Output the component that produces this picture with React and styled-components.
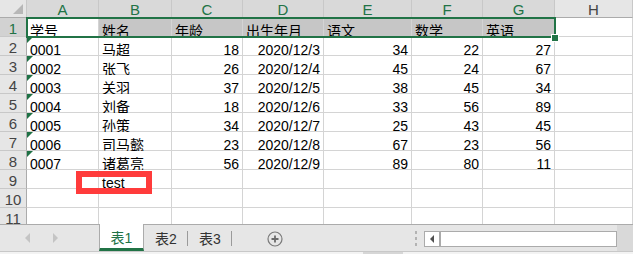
import React from "react";
import styled, { createGlobalStyle, css } from "styled-components";

const GlobalStyle = createGlobalStyle`
    html, body {
        margin: 0;
        padding: 0;
        background: #ffffff;
    }
    body {
        font-family: "Liberation Sans", "Noto Sans CJK SC", Arial, sans-serif;
        font-size: 14px;
        color: #000;
    }
`;

const COL_WIDTHS = [72, 73, 71, 81, 88, 71, 72, 78];
const LETTERS = ["A", "B", "C", "D", "E", "F", "G", "H"];

const HEADER = ["学号", "姓名", "年龄", "出生年月", "语文", "数学", "英语"];
const ROWS = [
    ["0001", "马超", 18, "2020/12/3", 34, 22, 27],
    ["0002", "张飞", 26, "2020/12/4", 45, 24, 67],
    ["0003", "关羽", 37, "2020/12/5", 38, 45, 34],
    ["0004", "刘备", 18, "2020/12/6", 33, 56, 89],
    ["0005", "孙策", 34, "2020/12/7", 25, 43, 45],
    ["0006", "司马懿", 23, "2020/12/8", 67, 23, 56],
    ["0007", "诸葛亮", 56, "2020/12/9", 89, 80, 11],
];

const Page = styled.div`
    width: 633px;
    height: 254px;
    overflow: hidden;
    display: flex;
    flex-direction: column;
    background: #fff;
`;

const Sheet = styled.div`
    position: relative;
    height: 224px;
    overflow: hidden;
    flex-shrink: 0;
`;

const Grid = styled.div`
    display: grid;
    grid-template-columns: 27px ${COL_WIDTHS.map((w) => `${w}px`).join(" ")};
    grid-template-rows: 18px repeat(11, 19px);
`;

const Corner = styled.div`
    position: relative;
    background: #e6e6e6;
    border-right: 1px solid #c8c8c8;
    border-bottom: 1px solid #ababab;
    box-sizing: border-box;
    &::after {
        content: "";
        position: absolute;
        right: 3px;
        bottom: 3px;
        width: 0;
        height: 0;
        border-left: 10px solid transparent;
        border-bottom: 10px solid #b7b7b7;
    }
`;

const ColHead = styled.div`
    box-sizing: border-box;
    display: flex;
    align-items: center;
    justify-content: center;
    font-size: 15px;
    background: ${(p) => (p.$active ? "#d9d9d9" : "#e6e6e6")};
    color: ${(p) => (p.$active ? "#217346" : "#444")};
    border-right: 1px solid #c8c8c8;
    border-bottom: 1px solid #ababab;
    padding-top: 1px;
`;

const RowHead = styled.div`
    box-sizing: border-box;
    display: flex;
    align-items: flex-end;
    justify-content: center;
    font-size: 15px;
    line-height: 10px;
    padding-bottom: 2px;
    background: ${(p) => (p.$active ? "#d2d2d2" : "#e6e6e6")};
    color: ${(p) => (p.$active ? "#217346" : "#444")};
    border-right: 1px solid #ababab;
    border-bottom: 1px solid #c8c8c8;
`;

const Cell = styled.div`
    position: relative;
    box-sizing: border-box;
    display: flex;
    align-items: flex-end;
    justify-content: ${(p) => (p.$num ? "flex-end" : "flex-start")};
    padding: 0 3px 0 3px;
    border-right: 1px solid #d4d4d4;
    border-bottom: 1px solid #d4d4d4;
    background: ${(p) => (p.$shade ? "#c6c6c6" : "#fff")};
    font-size: 14px;
    line-height: 10px;
    white-space: nowrap;
    ${(p) =>
        p.$flag &&
        css`
            &::before {
                content: "";
                position: absolute;
                left: 0;
                top: 0;
                border-top: 6px solid #1e7145;
                border-right: 6px solid transparent;
            }
        `}
`;

const Selection = styled.div`
    position: absolute;
    left: 26px;
    top: 17px;
    width: 530px;
    height: 21px;
    box-sizing: border-box;
    border: 2px solid #217346;
    pointer-events: none;
`;

const FillHandle = styled.div`
    position: absolute;
    left: 552px;
    top: 35px;
    width: 6px;
    height: 6px;
    background: #217346;
    border: 1px solid #fff;
    box-sizing: content-box;
    transform: translate(-1px, -1px);
`;

const Highlight = styled.div`
    position: absolute;
    left: 76px;
    top: 171px;
    width: 76px;
    height: 23px;
    box-sizing: border-box;
    border: 6px solid #ff3b3b;
    pointer-events: none;
`;

const TabBar = styled.div`
    height: 27px;
    flex-shrink: 0;
    display: flex;
    align-items: stretch;
    background: #e6e6e6;
    border-top: 1px solid #ababab;
    box-sizing: border-box;
`;

const NavArea = styled.div`
    width: 99px;
    display: flex;
    align-items: center;
    padding-left: 25px;
    gap: 23px;
    box-sizing: border-box;
`;

const NavArrow = styled.span`
    width: 0;
    height: 0;
    border-top: 5px solid transparent;
    border-bottom: 5px solid transparent;
    ${(p) =>
        p.$dir === "left"
            ? css`
                  border-right: 5px solid #c4c4c4;
              `
            : css`
                  border-left: 5px solid #c4c4c4;
              `}
`;

const Tab = styled.div`
    width: ${(p) => (p.$active ? "45px" : "44px")};
    display: flex;
    align-items: center;
    justify-content: center;
    position: relative;
    font-size: 14px;
    box-sizing: border-box;
    color: ${(p) => (p.$active ? "#217346" : "#333")};
    background: ${(p) => (p.$active ? "#fff" : "transparent")};
    margin-top: ${(p) => (p.$active ? "-1px" : "0")};
    border-left: ${(p) => (p.$active ? "1px solid #ababab" : "none")};
    border-right: ${(p) => (p.$active ? "1px solid #ababab" : "none")};
    border-bottom: ${(p) => (p.$active ? "3px solid #217346" : "3px solid transparent")};
    padding-top: 2px;
    ${(p) =>
        !p.$active &&
        css`
            &::after {
                content: "";
                position: absolute;
                right: 0;
                top: 6px;
                bottom: 2px;
                width: 1px;
                background: #9a9a9a;
            }
        `}
`;

const AddButton = styled.div`
    width: 86px;
    display: flex;
    align-items: center;
    justify-content: center;
    padding-top: 1px;
`;

const Grip = styled.div`
    width: 16px;
    display: flex;
    flex-direction: column;
    align-items: center;
    justify-content: center;
    gap: 3px;
    margin-left: auto;
    & > span {
        width: 2px;
        height: 3px;
        background: #b3b3b3;
    }
`;

const Scroll = styled.div`
    width: 193px;
    height: 16px;
    align-self: center;
    display: flex;
    border: 1px solid #ababab;
    box-sizing: border-box;
    background: #fff;
    margin-top: 1px;
`;

const ScrollBtn = styled.div`
    width: 14px;
    border-right: 2px solid #ababab;
    display: flex;
    align-items: center;
    justify-content: center;
    &::before {
        content: "";
        border-top: 4px solid transparent;
        border-bottom: 4px solid transparent;
        border-right: 4px solid #505050;
    }
`;

const ScrollTail = styled.div`
    width: 16px;
    background: #d9d9d9;
`;

const StatusStrip = styled.div`
    height: 3px;
    flex-shrink: 0;
    background: #f3f3f3;
    border-top: 1px solid #c8c8c8;
    position: relative;
    &::after {
        content: "";
        position: absolute;
        left: 363px;
        top: 0;
        width: 40px;
        height: 2px;
        background: #d6d6d6;
    }
`;

const PlusIcon = () => (
    <svg width="16" height="16" viewBox="0 0 16 16">
        <circle cx="8" cy="8" r="7" fill="none" stroke="#7a7a7a" strokeWidth="1.2" />
        <path d="M8 4.5v7M4.5 8h7" stroke="#6a6a6a" strokeWidth="1.8" />
    </svg>
);

const isNum = (v) => typeof v === "number";
const alignRight = (v, ci) => isNum(v) || ci === 3;

const App = () => {
    const body = [];
    for (let r = 1; r <= 11; r++) {
        body.push(
            <RowHead key={`rh${r}`} $active={r === 1}>
                {r}
            </RowHead>
        );
        for (let c = 0; c < 8; c++) {
            let value = "";
            let num = false;
            let shade = false;
            let flag = false;
            if (r === 1 && c < 7) {
                value = HEADER[c];
                shade = c > 0;
            } else if (r >= 2 && r <= 8 && c < 7) {
                value = ROWS[r - 2][c];
                num = alignRight(value, c);
                flag = c === 0;
            } else if (r === 9 && c === 1) {
                value = "test";
            }
            body.push(
                <Cell key={`c${r}-${c}`} $num={num} $shade={shade} $flag={flag}>
                    {value}
                </Cell>
            );
        }
    }

    return (
        <>
            <GlobalStyle />
            <Page>
                <Sheet>
                    <Grid>
                        <Corner />
                        {LETTERS.map((l, i) => (
                            <ColHead key={l} $active={i < 7}>
                                {l}
                            </ColHead>
                        ))}
                        {body}
                    </Grid>
                    <Selection />
                    <FillHandle />
                    <Highlight />
                </Sheet>
                <TabBar>
                    <NavArea>
                        <NavArrow $dir="left" />
                        <NavArrow $dir="right" />
                    </NavArea>
                    <Tab $active>表1</Tab>
                    <Tab>表2</Tab>
                    <Tab>表3</Tab>
                    <AddButton>
                        <PlusIcon />
                    </AddButton>
                    <Grip>
                        <span />
                        <span />
                        <span />
                    </Grip>
                    <Scroll>
                        <ScrollBtn />
                    </Scroll>
                    <ScrollTail />
                </TabBar>
                <StatusStrip />
            </Page>
        </>
    );
};

export default App;
